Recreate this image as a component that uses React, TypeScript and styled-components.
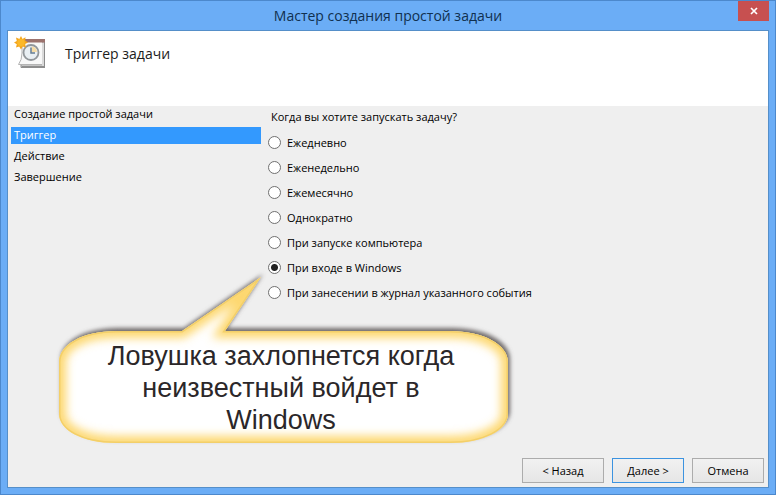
import React, { useState } from "react";
import styled, { createGlobalStyle } from "styled-components";

const GlobalStyle = createGlobalStyle`
  *, *::before, *::after { box-sizing: border-box; }
  body {
    margin: 0;
    font-family: "Open Sans", "Noto Sans", sans-serif;
    font-size: 11px;
    color: #000;
  }
`;

const Window = styled.div`
  min-height: 100vh;
  display: flex;
  flex-direction: column;
  padding: 0 6px 6px;
  background: #6badf6;
  border: 1px solid #4c88cc;
`;

const TitleBar = styled.header`
  display: grid;
  grid-template-columns: 31px 1fr 31px;
  align-items: start;
  height: 29px;
`;

const Title = styled.h1`
  grid-column: 2;
  margin: 0;
  text-align: center;
  font-size: 14px;
  font-weight: 400;
  line-height: 30px;
  color: #10304f;
`;

const CloseButton = styled.button`
  display: flex;
  align-items: center;
  justify-content: center;
  height: 20px;
  padding: 0;
  border: 0;
  background: #c75050;
`;

const Client = styled.main`
  flex: 1;
  display: flex;
  flex-direction: column;
  background: #efefef;
  border: 1px solid #558fc9;
`;

const Banner = styled.div`
  display: flex;
  align-items: flex-start;
  gap: 18px;
  height: 75px;
  padding: 5px 6px;
  background: #fff;
`;

const BannerTitle = styled.h2`
  margin: 0;
  font-size: 14px;
  font-weight: 400;
  line-height: 36px;
  color: #1c1c1c;
`;

const Body = styled.div`
  position: relative;
  flex: 1;
  display: grid;
  grid-template-columns: 250px 1fr;
  gap: 7px;
  padding-left: 3px;
`;

const Steps = styled.ol`
  display: flex;
  flex-direction: column;
  gap: 4px;
  margin: 0;
  padding: 0;
  list-style: none;
`;

const Step = styled.li<{ $current?: boolean }>`
  height: 17px;
  padding-left: 3px;
  line-height: 16px;
  color: ${(p) => (p.$current ? "#fff" : "inherit")};
  background: ${(p) => (p.$current ? "#3399fe" : "transparent")};
`;

const Options = styled.fieldset`
  min-width: 0;
  margin: 0;
  padding: 0;
  border: 0;
`;

const Question = styled.legend`
  padding: 2px 3px 4px;
  line-height: 18px;
`;

const Option = styled.label`
  display: flex;
  align-items: center;
  gap: 6px;
  height: 25px;
`;

const Radio = styled.input`
  appearance: none;
  width: 13px;
  height: 13px;
  margin: 0;
  border: 1px solid #707070;
  border-radius: 50%;
  background: #fff;
  &:checked {
    background: radial-gradient(circle, #222 3px, #fff 4px);
  }
`;

const Footer = styled.footer`
  display: flex;
  justify-content: flex-end;
  gap: 8px;
  padding: 4px;
`;

const Button = styled.button<{ $primary?: boolean; $wide?: boolean }>`
  width: ${(p) => (p.$wide ? 82 : 72)}px;
  height: 25px;
  padding: 0;
  font: inherit;
  color: inherit;
  border: 1px solid ${(p) => (p.$primary ? "#3c93e0" : "#acacac")};
  background: linear-gradient(#f1f1f1, #e6e6e6);
`;

const Callout = styled.aside`
  position: absolute;
  left: 40px;
  top: 159px;
  width: 474px;
  height: 190px;
`;

const CalloutShape = styled.svg`
  display: block;
`;

const CalloutText = styled.p`
  position: absolute;
  inset: 75px 20px auto 12px;
  margin: 0 auto;
  max-width: 380px;
  text-align: center;
  font-family: "Liberation Sans", Arial, sans-serif;
  font-size: 27px;
  line-height: 32px;
  color: #2b2729;
`;

const bubble =
  "M68 66 H134 L213 12 L177 66 H402 C436 66 460 80 460 97 V149 C460 165 436 178 402 178 H68 C34 178 11 165 11 149 V97 C11 80 34 66 68 66 Z";

function CalloutBubble() {
  return (
    <CalloutShape width="474" height="190" viewBox="0 0 474 190" aria-hidden="true">
      <defs>
        <clipPath id="bubble-clip">
          <path d={bubble} />
        </clipPath>
        <filter id="soft-shadow" x="-10%" y="-10%" width="120%" height="120%">
          <feGaussianBlur stdDeviation="2" />
        </filter>
        <filter id="soft-glow" x="-10%" y="-10%" width="120%" height="120%">
          <feGaussianBlur stdDeviation="5" />
        </filter>
      </defs>
      <path d={bubble} fill="#6f6a6a" filter="url(#soft-shadow)" transform="translate(2 -3)" />
      <path d={bubble} fill="#fff" />
      <g clipPath="url(#bubble-clip)">
        <path
          d={bubble}
          fill="none"
          stroke="#fdd055"
          strokeWidth="14"
          strokeOpacity="0.85"
          filter="url(#soft-glow)"
        />
        <path d={bubble} fill="none" stroke="#f3cf69" strokeWidth="3" />
      </g>
    </CalloutShape>
  );
}

function TaskIcon() {
  return (
    <svg width="33" height="33" viewBox="0 0 33 33" aria-hidden="true">
      <path d="M7 27V31.500H30.500V4" fill="#c4c4c4" stroke="#8b8b8b" />
      <path d="M8 4H28.500V28.500H4.500Q8 24 8 17Z" fill="#f8f8f8" stroke="#b4b4b4" />
      <path d="M8 3H31V6.500H8Z" fill="#9c736e" />
      <path d="M29 7V30" stroke="#dadada" strokeWidth="2" />
      <path d="M8 31H31" stroke="#8d8d8d" strokeWidth="2" />
      <circle cx="17" cy="16.500" r="7.500" fill="#e9eff3" stroke="#92979b" strokeWidth="1.800" />
      <path d="M17.500 16V10.500A6 6 0 0 1 23 16Z" fill="#f6dca6" />
      <path d="M17 11.500V17H21" fill="none" stroke="#667e94" strokeWidth="1.500" />
      <path
        d="M7 0L8.500 3L11.500 1.200L11.200 4.600L14 6.500L11.200 8L11.800 11.400L8.600 10.400L7 13.500L5.200 10.600L2 11.600L2.800 8.200L0 6.600L2.800 5L2 1.600L5.400 3Z"
        fill="#f3a51c"
      />
      <circle cx="7" cy="6.600" r="3.800" fill="#fbb829" />
    </svg>
  );
}

const steps = ["Создание простой задачи", "Триггер", "Действие", "Завершение"];

const triggers = [
  "Ежедневно",
  "Еженедельно",
  "Ежемесячно",
  "Однократно",
  "При запуске компьютера",
  "При входе в Windows",
  "При занесении в журнал указанного события",
];

export default function App() {
  const [trigger, setTrigger] = useState(5);
  return (
    <>
      <GlobalStyle />
      <Window>
        <TitleBar>
          <Title>Мастер создания простой задачи</Title>
          <CloseButton type="button" aria-label="Закрыть">
            <svg width="8" height="8" viewBox="0 0 8 8" aria-hidden="true">
              <path d="M1 1L7 7M7 1L1 7" stroke="#fff" strokeWidth="1.700" />
            </svg>
          </CloseButton>
        </TitleBar>
        <Client>
          <Banner>
            <TaskIcon />
            <BannerTitle>Триггер задачи</BannerTitle>
          </Banner>
          <Body>
            <Steps>
              {steps.map((step, i) => (
                <Step key={step} $current={i === 1} aria-current={i === 1 ? "step" : undefined}>
                  {step}
                </Step>
              ))}
            </Steps>
            <Options>
              <Question>Когда вы хотите запускать задачу?</Question>
              {triggers.map((name, i) => (
                <Option key={name}>
                  <Radio
                    type="radio"
                    name="trigger"
                    checked={trigger === i}
                    onChange={() => setTrigger(i)}
                  />
                  {name}
                </Option>
              ))}
            </Options>
            <Callout>
              <CalloutBubble />
              <CalloutText>Ловушка захлопнется когда неизвестный войдет в Windows</CalloutText>
            </Callout>
          </Body>
          <Footer>
            <Button type="button" $wide>
              &lt; Назад
            </Button>
            <Button type="button" $primary>
              Далее &gt;
            </Button>
            <Button type="button">Отмена</Button>
          </Footer>
        </Client>
      </Window>
    </>
  );
}
